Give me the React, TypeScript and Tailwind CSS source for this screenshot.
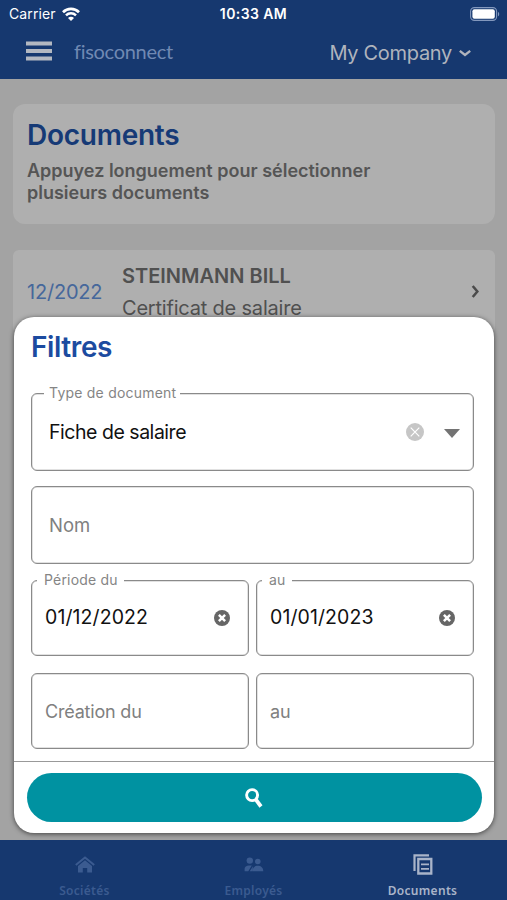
import { useState, type ReactNode } from 'react';
import clsx from 'clsx';

type IconProps = { className?: string };

const WifiIcon = ({ className }: IconProps) => (
  <svg className={className} viewBox="0 0 18 14" fill="none">
    <path d="M1 5.2a11.400 11.400 0 0 1 16 0" stroke="currentColor" strokeWidth="2.700" />
    <path d="M4 8.400a7.100 7.100 0 0 1 10 0" stroke="currentColor" strokeWidth="2.500" />
    <path d="M9 14 6 11a4.200 4.200 0 0 1 6 0z" fill="currentColor" />
  </svg>
);

const BatteryIcon = ({ className }: IconProps) => (
  <svg className={className} viewBox="0 0 30 14" fill="none">
    <rect x="0.6" y="0.6" width="26" height="12.8" rx="3.8" stroke="#8398bd" strokeWidth="1.1" />
    <rect x="2.4" y="2.3" width="22.4" height="9.4" rx="2" fill="#fff" />
    <path d="M28 5v4.2c1.600-.5 1.600-3.700 0-4.200z" fill="#8398bd" />
  </svg>
);

const MenuIcon = ({ className }: IconProps) => (
  <svg className={className} viewBox="0 0 26 20" fill="currentColor">
    <path d="M0 .5h26V4.500H0zM0 8h26v4H0zM0 15.500h26v4H0z" />
  </svg>
);

const ChevronDown = ({ className }: IconProps) => (
  <svg className={className} viewBox="0 0 12 8" fill="none">
    <path d="M.8 1.800 6 6l5.200-4.200" stroke="currentColor" strokeWidth="2.300" />
  </svg>
);

const ChevronRight = ({ className }: IconProps) => (
  <svg className={className} viewBox="0 0 9 14" fill="none">
    <path d="M1.500 1 6.500 7l-5 6" stroke="currentColor" strokeWidth="2.700" />
  </svg>
);

const SearchIcon = ({ className }: IconProps) => (
  <svg className={className} viewBox="0 0 18 20" fill="none" stroke="currentColor">
    <circle cx="7.100" cy="7.100" r="5.500" strokeWidth="2.900" />
    <path d="m10.700 11.300 5.300 7.200" strokeWidth="3.800" />
  </svg>
);

const HomeIcon = ({ className }: IconProps) => (
  <svg className={className} viewBox="0 0 20 17">
    <path d="M.8 9 10 1.500 19.200 9" fill="none" stroke="currentColor" strokeWidth="2" />
    <path d="M10 4.300 3 10V16.500h4.800v-4.500h4.400v4.500H17V10z" fill="currentColor" />
  </svg>
);

const PeopleIcon = ({ className }: IconProps) => (
  <svg className={className} viewBox="0 0 20 15" fill="currentColor">
    <circle cx="5.800" cy="3.600" r="3.200" />
    <circle cx="13.800" cy="4.500" r="2.800" />
    <path d="M.6 14.300v-2.600c0-2 1.800-3.300 4.400-3.300h2.800L4.300 14.300zM5.700 14.300 9 9.300l-.5 5zM8.600 14.300c0-3.800 2-5.600 5.200-5.600s5.500 1.800 5.500 5.600z" />
  </svg>
);

const DocumentsIcon = ({ className }: IconProps) => (
  <svg className={className} viewBox="0 0 20 21" fill="none" stroke="currentColor">
    <path d="M1.500 17V1.300h14.500" strokeWidth="2.200" />
    <path d="M5.300 5h13v14.500h-13z" strokeWidth="2.300" />
    <path d="M8 10.300h8M8 14.800h8" strokeWidth="1.800" />
  </svg>
);

function ClearIcon({ light }: { light?: boolean }) {
  return (
    <svg className={clsx('shrink-0', light ? 'h-[18px] w-[18px]' : 'h-4 w-4')} viewBox="0 0 18 18">
      <circle cx="9" cy="9" r="9" fill={light ? '#c6c6c6' : '#666'} />
      <path
        d={light ? 'm4.700 4.700 8.600 8.600m0-8.600-8.600 8.600' : 'm5.500 5.500 7 7m0-7-7 7'}
        stroke="#fff"
        strokeWidth={light ? 1.2 : 2.8}
      />
    </svg>
  );
}

type FieldProps = {
  label: string;
  value?: string;
  wide?: boolean;
  className?: string;
  children?: ReactNode;
};

function Field({ label, value, wide, className, children }: FieldProps) {
  return (
    <div
      className={clsx(
        'relative flex items-center rounded-md border border-[#8a8a8a] text-[19.5px] shadow-[inset_0_0_0_0.5px_#c4c4c4]',
        wide ? 'h-[78px] pl-[17px] pr-4' : 'h-[76px] pl-[13px] pr-[18px]',
        className
      )}
    >
      {value ? (
        <>
          <span
            className={clsx(
              'absolute -top-[11px] bg-white text-[14px] leading-5 text-[#858585]',
              wide ? 'left-3 pl-[5px] pr-1 tracking-[0.22px]' : 'left-[5px] pl-[7px] pr-1.5 tracking-[0.2px]'
            )}
          >
            {label}
          </span>
          <span className={clsx('flex-1 text-[#111]', wide ? 'pt-0.5 tracking-[-0.47px]' : 'tracking-[0.1px]')}>
            {value}
          </span>
          {children}
        </>
      ) : (
        <span className={clsx('text-[#808080]', wide ? 'pt-px text-[18.5px]' : 'text-[18px] tracking-[-0.2px]')}>
          {label}
        </span>
      )}
    </div>
  );
}

const tabs = [
  { id: 'societes', label: 'Sociétés', icon: <HomeIcon className="h-[17px] w-5" /> },
  { id: 'employes', label: 'Employés', icon: <PeopleIcon className="h-[15px] w-5" /> },
  { id: 'documents', label: 'Documents', icon: <DocumentsIcon className="h-[21px] w-5" /> },
];

export default function App() {
  const [activeTab, setActiveTab] = useState('documents');

  return (
    <div className="relative flex h-[900px] w-[507px] flex-col overflow-hidden bg-[#a3a3a3] font-['Inter',sans-serif]">
      <header className="h-[79px] shrink-0 bg-[#16386f]">
        <div className="grid h-[27px] grid-cols-3 items-center pl-[9px] pr-[7px] text-[14px] text-white">
          <div className="flex items-center gap-1.5">
            <span className="tracking-[0.1px]">Carrier</span>
            <WifiIcon className="h-3.5 w-[18px]" />
          </div>
          <span className="-ml-0.5 text-center font-semibold tracking-[0.4px]">10:33 AM</span>
          <BatteryIcon className="h-3.5 w-[30px] justify-self-end" />
        </div>
        <div className="flex h-[50px] items-center pl-[26px] pr-9">
          <MenuIcon className="mb-[3px] h-5 w-[26px] text-[#b3b8c1]" />
          <span className="mb-0.5 ml-[22px] font-['Lato',sans-serif] text-[20px] tracking-[-0.3px] text-[#7089b3]">
            fisoconnect
          </span>
          <button className="ml-auto flex items-center gap-[7px] pt-0.5 text-[20px] text-[#b0b4bd]">
            <span className="tracking-[-0.3px]">My Company</span>
            <ChevronDown className="h-2 w-3" />
          </button>
        </div>
      </header>

      <main className="flex-1 px-3 pt-[25px]">
        <section className="ml-px h-[120px] rounded-xl bg-[#afafaf] px-3.5 pt-3">
          <h1 className="text-[28px] font-semibold leading-[38px] tracking-[-0.25px] text-[#163a76]">Documents</h1>
          <p className="mt-1.5 text-[18px] font-semibold leading-[22px] text-[#555]">
            Appuyez longuement pour sélectionner
            <br />
            plusieurs documents
          </p>
        </section>
        <section className="ml-px mt-[26px] flex h-[84px] items-center rounded-md bg-[#afafaf] pl-3.5 pr-[15px]">
          <span className="w-[95px] text-[20px] tracking-[-0.2px] text-[#46679b]">12/2022</span>
          <div className="leading-8 text-[#505050]">
            <p className="text-[20px] font-semibold">STEINMANN BILL</p>
            <p className="text-[20px] tracking-[-0.2px]">Certificat de salaire</p>
          </div>
          <ChevronRight className="mb-0.5 ml-auto h-[13px] w-[9px] text-[#4b4b4b]" />
        </section>
      </main>

      <nav className="grid h-[60px] shrink-0 grid-cols-3 bg-[#16386f]">
        {tabs.map((tab) => (
          <button
            key={tab.id}
            onClick={() => setActiveTab(tab.id)}
            className={clsx(
              'flex flex-col items-center pt-3',
              activeTab === tab.id ? 'text-[#a9b4c9]' : 'text-[#3b5b90]'
            )}
          >
            <span className="flex h-6 items-center">{tab.icon}</span>
            <span className="mt-1.5 font-['Noto_Sans',sans-serif] text-[12px] font-semibold leading-[18px] tracking-[0.3px]">
              {tab.label}
            </span>
          </button>
        ))}
      </nav>

      <div className="absolute left-3.5 top-[317px] flex h-[516px] w-[480px] flex-col rounded-[20px] bg-white shadow-[0_1px_5px_rgba(0,0,0,0.6)]">
        <div className="h-[445px] shrink-0 border-b border-[#999] pl-[17px] pr-5 pt-2.5">
          <h2 className="text-[28px] font-semibold leading-[40px] tracking-[-0.4px] text-[#1c4ba0]">Filtres</h2>
          <Field wide label="Type de document" value="Fiche de salaire" className="mt-[26px]">
            <ClearIcon light />
            <svg className="ml-5 mr-[-3px] mt-[3px] h-[9px] w-4" viewBox="0 0 16 9" fill="#737373">
              <path d="M0 0h16L8 9z" />
            </svg>
          </Field>
          <Field wide label="Nom" className="mt-[15px]" />
          <div className="mt-4 grid grid-cols-2 gap-x-[7px] gap-y-[17px]">
            <Field label="Période du" value="01/12/2022">
              <ClearIcon />
            </Field>
            <Field label="au" value="01/01/2023">
              <ClearIcon />
            </Field>
            <Field label="Création du" />
            <Field label="au" />
          </div>
        </div>
        <button className="ml-[12.5px] mt-[11px] flex h-[49px] w-[455px] items-center justify-center rounded-full bg-[#0092a1] text-white">
          <SearchIcon className="h-5 w-[18px]" />
        </button>
      </div>
    </div>
  );
}
